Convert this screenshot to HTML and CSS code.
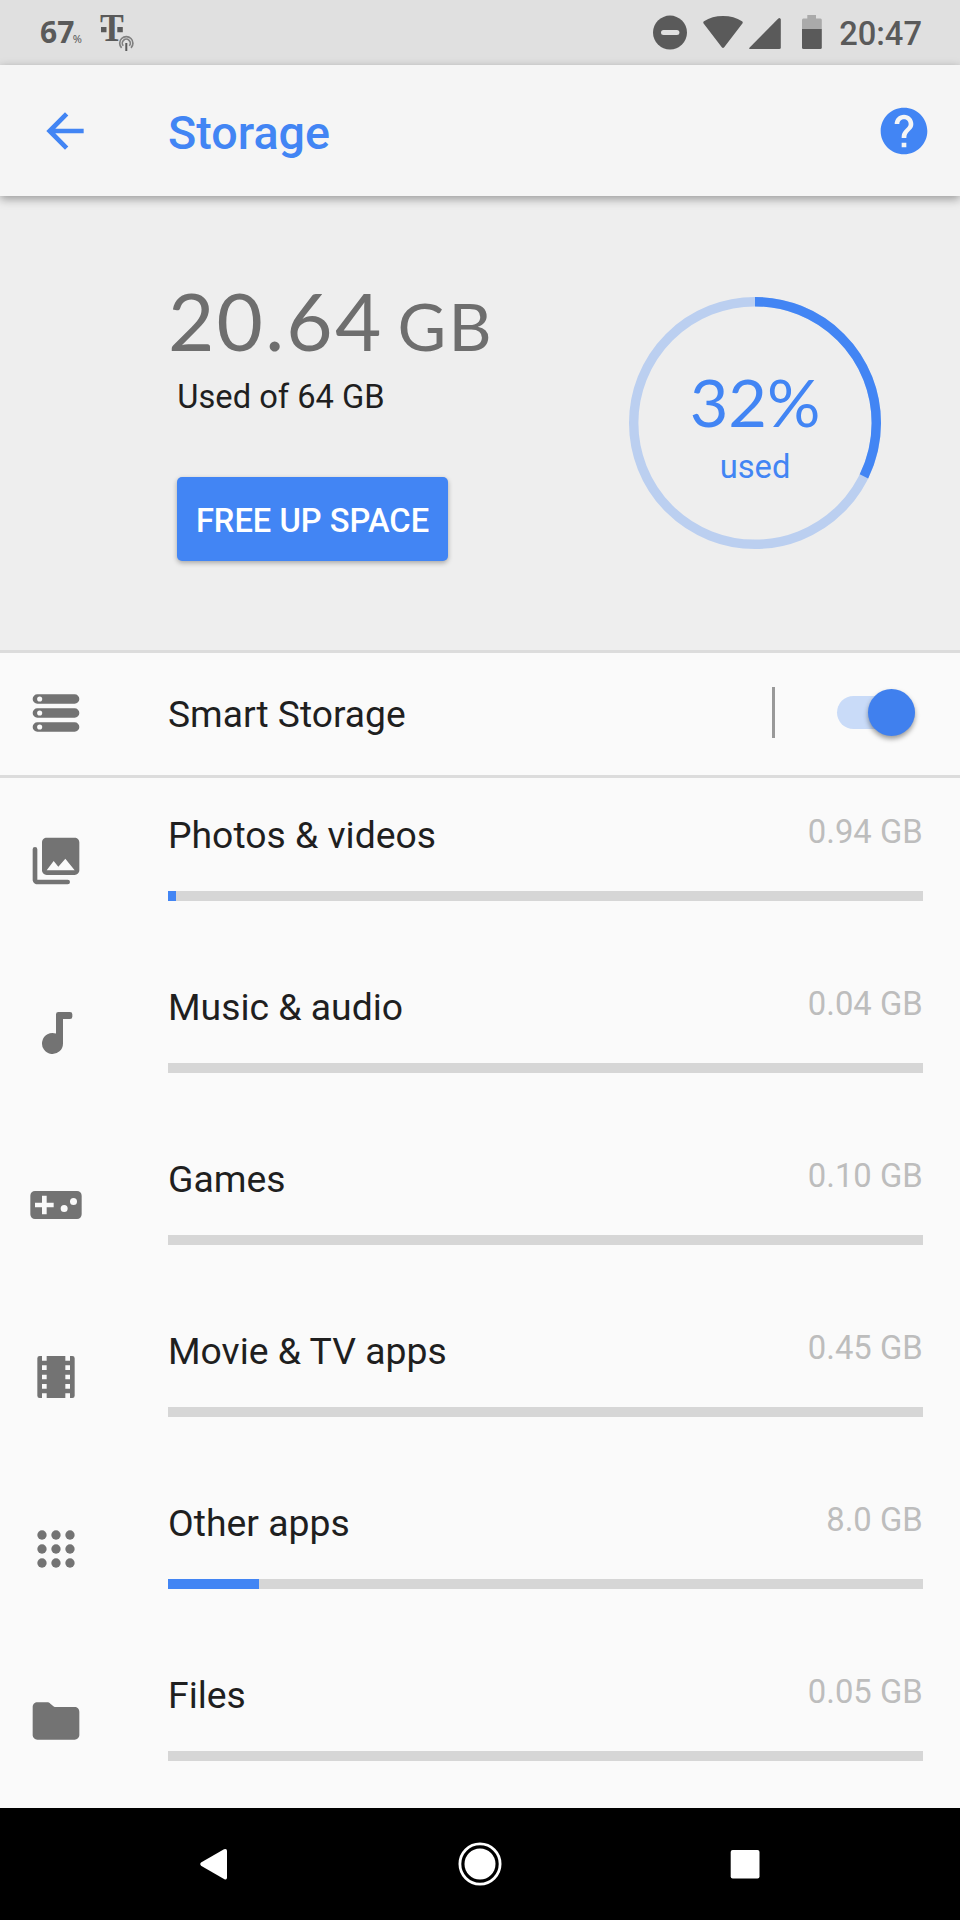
FILE: index.html
```html
<!DOCTYPE html>
<html lang="en">
<head>
<meta charset="utf-8">
<title>Storage</title>
<link rel="stylesheet" href="styles.css">
</head>
<body>
<div class="screen">
  <div class="status">
    <div class="status-left">
      <span class="pct">67<small>%</small></span>
      <svg class="carrier" width="36" height="53" viewBox="0 -12 36 53">
        <text class="carrier-t" transform="translate(13 29) scale(.87 1)" text-anchor="middle">T</text>
        <path d="M2 15h5.500v5.200H2zM18.300 15h5.500v5.200h-5.500z"/>
        <circle class="halo" cx="27.300" cy="31" r="8"/>
        <path class="wave" d="M22.600 35.800a6.600 6.600 0 1 1 9.400 0M24.300 33.800a4 4 0 1 1 6 0"/>
        <path d="M26.300 31h2v8h-2z"/>
      </svg>
    </div>
    <div class="status-right">
      <svg width="34" height="40" viewBox="0 0 34 40"><circle cx="17" cy="20.600" r="17"/><rect class="cut" x="8" y="18.100" width="18.400" height="5" rx="2.500"/></svg>
      <svg class="wifi" width="40" height="40" viewBox="0 0 40 40"><path d="M1 12Q-.5 10.500 1 9.300Q9 4 20 4T39 9.300Q40.500 10.500 39 12L21.200 35.300Q20 36.700 18.800 35.300z"/></svg>
      <svg class="signal" width="32" height="40" viewBox="0 0 32 40"><path d="M31.800 7.500V35.500Q31.800 37 30.300 37H1.300Q-.6 37 .7 35.400L29.300 6.500Q31.300 5 31.800 7.500z"/></svg>
      <svg class="battery" width="20" height="40" viewBox="0 0 20 40"><path class="faint" d="M5.300 3h8.700v3.500h4.500Q19.800 6.500 19.800 8V17H0V8Q0 6.500 1.300 6.500h4z"/><path d="M0 17h19.800v18.500Q19.800 37 18.300 37H1.500Q0 37 0 35.500z"/></svg>
      <span class="clock">20:47</span>
    </div>
  </div>

  <header class="bar">
    <svg class="icon" viewBox="0 0 24 24"><path d="M20 11H7.830l5.590-5.590L12 4l-8 8 8 8 1.410-1.410L7.830 13H20z"/></svg>
    <h1>Storage</h1>
    <svg class="icon" viewBox="0 0 24 24"><path d="M12 2C6.480 2 2 6.480 2 12s4.480 10 10 10 10-4.480 10-10S17.520 2 12 2zm1 17h-2v-2h2zm2.070-7.750-.9.920C13.450 12.900 13 13.500 13 15h-2v-.5c0-1.100.45-2.100 1.170-2.830l1.240-1.260c.37-.36.590-.86.590-1.410 0-1.100-.9-2-2-2s-2 .9-2 2H8c0-2.210 1.790-4 4-4s4 1.790 4 4c0 .88-.36 1.680-.93 2.250z"/></svg>
  </header>

  <section class="summary">
    <div class="usage">
      <div class="amount">20.64<span class="unit">GB</span></div>
      <div class="of">Used of 64 GB</div>
      <button class="free">FREE UP SPACE</button>
    </div>
    <div class="ring">
      <svg width="252" height="252" viewBox="0 0 252 252">
        <circle class="ring-track" cx="126" cy="126" r="121.300"/>
        <circle class="ring-value" cx="126" cy="126" r="121.300" pathLength="100" stroke-dasharray="32.250 100" transform="rotate(-90 126 126)"/>
      </svg>
      <div class="ring-label"><span class="ring-pct">32%</span><span class="ring-used">used</span></div>
    </div>
  </section>

  <section class="smart">
    <svg class="icon" viewBox="0 0 24 24"><path fill-rule="evenodd" d="M4 4h16a2 2 0 0 1 0 4H4a2 2 0 0 1 0-4zM4 10h16a2 2 0 0 1 0 4H4a2 2 0 0 1 0-4zM4 16h16a2 2 0 0 1 0 4H4a2 2 0 0 1 0-4zM5 4.900a1.100 1.100 0 1 0 0 2.200 1.100 1.100 0 0 0 0-2.200zM5 10.900a1.100 1.100 0 1 0 0 2.200 1.100 1.100 0 0 0 0-2.200zM5 16.900a1.100 1.100 0 1 0 0 2.200 1.100 1.100 0 0 0 0-2.200z"/></svg>
    <span class="smart-name">Smart Storage</span>
    <span class="divider"></span>
    <span class="switch"><span class="thumb"></span></span>
  </section>

  <main class="list">
    <div class="row">
      <svg class="icon" viewBox="0 0 24 24"><path fill-rule="evenodd" d="M22 16V4c0-1.100-.9-2-2-2H8c-1.100 0-2 .9-2 2v12c0 1.100.9 2 2 2h12c1.100 0 2-.9 2-2zM8 16l3-4 2 2.500 3-3.500 4 5zM2 7a1 1 0 0 1 2 0v13h13a1 1 0 0 1 0 2H4c-1.100 0-2-.9-2-2z"/></svg>
      <div class="info"><div class="line"><span class="name">Photos &amp; videos</span><span class="size">0.94 GB</span></div><div class="meter"><div class="fill" style="width:8px"></div></div></div>
    </div>
    <div class="row">
      <svg class="icon" viewBox="0 0 24 24"><path d="M12 4Q12 3 13 3h5q1 0 1 1v1q0 1-1 1h-3v10.500A4.500 4.500 0 1 1 12 12.260z"/></svg>
      <div class="info"><div class="line"><span class="name">Music &amp; audio</span><span class="size">0.04 GB</span></div><div class="meter"></div></div>
    </div>
    <div class="row">
      <svg class="icon" viewBox="0 0 24 24"><path fill-rule="evenodd" d="M3 6h18a2 2 0 0 1 2 2v8a2 2 0 0 1-2 2H3a2 2 0 0 1-2-2V8a2 2 0 0 1 2-2zM6 8v3H3v2h3v3h2v-3h3v-2H8V8zM15.500 12a1.500 1.500 0 1 0 0 3 1.500 1.500 0 0 0 0-3zM19.500 9a1.500 1.500 0 1 0 0 3 1.500 1.500 0 0 0 0-3z"/></svg>
      <div class="info"><div class="line"><span class="name">Games</span><span class="size">0.10 GB</span></div><div class="meter"></div></div>
    </div>
    <div class="row">
      <svg class="icon" viewBox="0 0 24 24"><path fill-rule="evenodd" d="M5 3h1v2h2V3h8v2h2V3h1q1 0 1 1v16q0 1-1 1h-1v-2h-2v2H8v-2H6v2H5q-1 0-1-1V4q0-1 1-1zM6 7v2h2V7zM6 11v2h2v-2zM6 15v2h2v-2zM16 7v2h2V7zM16 11v2h2v-2zM16 15v2h2v-2z"/></svg>
      <div class="info"><div class="line"><span class="name">Movie &amp; TV apps</span><span class="size">0.45 GB</span></div><div class="meter"></div></div>
    </div>
    <div class="row">
      <svg class="icon" viewBox="0 0 24 24"><circle cx="6" cy="6" r="2"/><circle cx="12" cy="6" r="2"/><circle cx="18" cy="6" r="2"/><circle cx="6" cy="12" r="2"/><circle cx="12" cy="12" r="2"/><circle cx="18" cy="12" r="2"/><circle cx="6" cy="18" r="2"/><circle cx="12" cy="18" r="2"/><circle cx="18" cy="18" r="2"/></svg>
      <div class="info"><div class="line"><span class="name">Other apps</span><span class="size">8.0 GB</span></div><div class="meter"><div class="fill" style="width:91px"></div></div></div>
    </div>
    <div class="row">
      <svg class="icon" viewBox="0 0 24 24"><path d="M9.590 4.590C9.210 4.210 8.700 4 8.170 4H4c-1.100 0-1.990.9-1.990 2L2 18c0 1.100.9 2 2 2h16c1.100 0 2-.9 2-2V8c0-1.100-.9-2-2-2h-8.500q-.3 0-.6-.3z"/></svg>
      <div class="info"><div class="line"><span class="name">Files</span><span class="size">0.05 GB</span></div><div class="meter"></div></div>
    </div>
  </main>

  <nav class="nav">
    <svg width="44" height="44" viewBox="0 0 44 44"><path d="M9 20.500Q7.300 22 9 23.700L32 37Q35 38.500 35 35.500V9Q35 6.300 32 7.300z"/></svg>
    <svg width="44" height="44" viewBox="0 0 44 44"><circle cx="22" cy="22" r="15.500"/><circle class="outline" cx="22" cy="22" r="20.100"/></svg>
    <svg width="44" height="44" viewBox="0 0 44 44"><rect x="7.700" y="8" width="28.800" height="28.500" rx="2"/></svg>
  </nav>
</div>
</body>
</html>
```
FILE: styles.css
```css
* { box-sizing: border-box; }
body { margin: 0; background: #fafafa; font-family: Roboto, "Liberation Sans", sans-serif; color: #1f1f1f; }
svg { display: block; flex: none; }

.screen { width: 960px; height: 1920px; display: flex; flex-direction: column; overflow: hidden; }

.status { height: 65px; flex: none; padding: 12px 38px 0 40px; background: #e0e0e0; color: #5a5a5a; fill: #5a5a5a; display: flex; justify-content: space-between; }
.status-left, .status-right { display: flex; }
.pct { width: 59px; font: bold 30px/40px "Noto Sans", sans-serif; }
.pct small { font-size: 11px; font-weight: 400; margin-left: -1.500px; }
.carrier { margin-top: -12px; overflow: visible; }
.carrier-t { font: bold 41px "Liberation Serif", serif; }
.carrier .halo { fill: #e0e0e0; }
.carrier .wave { fill: none; stroke: #808080; stroke-width: 1.700; }
.cut { fill: #e0e0e0; }
.wifi { margin-left: 16px; }
.signal { margin-left: 6px; }
.battery { margin-left: 21px; }
.faint { fill: #aaa; }
.clock { margin-left: 17px; font-size: 32.670px; font-weight: 500; line-height: 44px; }

.bar { position: relative; height: 131px; flex: none; padding: 0 28px 0 37px; background: #f5f5f5; color: #4285f4; fill: #4285f4; display: flex; align-items: center; box-shadow: 0 3px 9px rgba(0,0,0,.36); }
.bar h1 { flex: 1; margin: 5px 0 0 75px; font-size: 46.670px; line-height: 56px; font-weight: 500; }
.icon { width: 56px; height: 56px; }

.summary { height: 457px; flex: none; padding-left: 168px; background: #eee; border-bottom: 3px solid #dcdcdc; display: flex; }
.usage { width: 461px; padding-top: 75px; }
.amount { height: 95px; font: 400 80px/98px Lato, sans-serif; letter-spacing: 2.200px; color: #6e6e6e; white-space: nowrap; }
.unit { font-size: 66.670px; margin-left: 14px; }
.of { margin: 11px 0 0 9.300px; font-size: 32.670px; line-height: 40px; }
.free { display: block; width: 271px; height: 84px; margin: 60px 0 0 9px; padding: 4px 0 0; border: 0; border-radius: 5px; background: #4285f4; color: #fff; font: 500 32.670px/40px Roboto, sans-serif; white-space: nowrap; box-shadow: 0 2px 5px rgba(0,0,0,.3); }
.ring { width: 252px; height: 252px; margin-top: 100.500px; display: grid; }
.ring > * { grid-area: 1 / 1; }
.ring circle { fill: none; stroke-width: 9.400; }
.ring-track { stroke: #bbcff0; }
.ring-value { stroke: #4285f4; }
.ring-label { display: flex; flex-direction: column; align-items: center; color: #4285f4; padding-top: 64px; }
.ring-pct { font: 400 66.670px/80px Lato, sans-serif; }
.ring-used { font-size: 32.670px; line-height: 40px; margin-top: 6px; }

.smart { height: 125px; flex: none; padding: 0 37px 0 28px; border-bottom: 3px solid #dcdcdc; display: flex; align-items: center; fill: #737373; }
.smart .icon { margin-top: -3px; }
.smart-name { flex: 1; margin-left: 84px; font-size: 37.200px; line-height: 44px; margin-top: -1px; }
.divider { width: 3px; height: 51px; background: #999; margin: -3px 62px 0 0; }
.switch { width: 78px; height: 33px; margin: -3px 8px 0 0; border-radius: 17px; background: #c9dbf8; display: flex; justify-content: flex-end; align-items: center; }
.thumb { flex: none; width: 47px; height: 47px; border-radius: 50%; background: #4080ee; box-shadow: 0 3px 5px rgba(0,0,0,.38); }

.list { height: 1030px; flex: none; overflow: hidden; fill: #737373; }
.row { height: 172px; padding: 35px 37.330px 0 28px; display: flex; }
.row .icon { margin-top: 20.330px; }
.info { flex: 1; margin-left: 84px; }
.line { display: flex; justify-content: space-between; }
.name { font-size: 37.330px; line-height: 44px; }
.size { font-size: 32.800px; line-height: 38px; color: #bdbdbd; }
.meter { height: 10px; margin-top: 34px; background: #d6d6d6; }
.fill { height: 10px; background: #4285f4; }

.nav { flex: 1; background: #000; fill: #fff; display: flex; justify-content: center; gap: 221.500px; padding: 33.500px 1px 0 0; }
.outline { fill: none; stroke: #fff; stroke-width: 2.800; }
```
